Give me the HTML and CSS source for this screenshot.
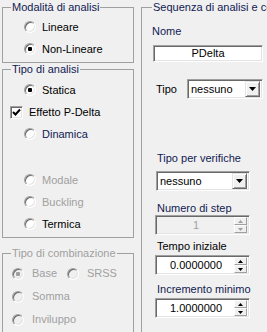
FILE: index.html
```html
<!DOCTYPE html>
<html lang="it">
<head>
    <meta charset="UTF-8">
    <meta name="viewport" content="width=device-width, initial-scale=1.0">
    <title>Parametri di analisi</title>
    <link rel="stylesheet" href="styles.css">
</head>
<body>
  <div class="panel">
    <div class="left">
      <fieldset class="group g-mode">
        <legend>Modalità di analisi</legend>
        <div class="opt"><span class="radio"></span>Lineare</div>
        <div class="opt"><span class="radio on"></span>Non-Lineare</div>
      </fieldset>

      <fieldset class="group g-type">
        <legend>Tipo di analisi</legend>
        <div class="opt"><span class="radio on"></span>Statica</div>
        <div class="opt chk">
          <span class="check">
            <svg width="9" height="9" viewBox="0 0 9 9"><path d="M1 4 L3.5 6.5 L8 1.5" fill="none" stroke="#000" stroke-width="2"/></svg>
          </span>Effetto P-Delta
        </div>
        <div class="opt navy"><span class="radio"></span>Dinamica</div>
        <div class="spacer"></div>
        <div class="opt off"><span class="radio"></span>Modale</div>
        <div class="opt off"><span class="radio"></span>Buckling</div>
        <div class="opt"><span class="radio"></span>Termica</div>
      </fieldset>

      <fieldset class="group g-comb off">
        <legend>Tipo di combinazione</legend>
        <div class="opt-line">
          <div class="opt wide"><span class="radio on"></span>Base</div>
          <div class="opt"><span class="radio"></span>SRSS</div>
        </div>
        <div class="opt"><span class="radio"></span>Somma</div>
        <div class="opt"><span class="radio"></span>Inviluppo</div>
      </fieldset>
    </div>

    <fieldset class="group seq">
      <legend>Sequenza di analisi e combinazioni</legend>

      <div class="lbl navy lbl-nome">Nome</div>
      <div class="field name-field">PDelta</div>

      <div class="tipo-row">
        <span class="tipo-lbl">Tipo</span>
        <div class="combo combo-tipo">
          <span class="combo-text">nessuno</span>
          <span class="combo-btn">
            <svg width="7" height="4" viewBox="0 0 7 4"><path d="M0 0 H7 L3.5 4 Z" fill="#000"/></svg>
          </span>
        </div>
      </div>

      <div class="lbl navy lbl-verif">Tipo per verifiche</div>
      <div class="combo combo-verif">
        <span class="combo-text">nessuno</span>
        <span class="combo-btn">
          <svg width="7" height="4" viewBox="0 0 7 4"><path d="M0 0 H7 L3.5 4 Z" fill="#000"/></svg>
        </span>
      </div>

      <div class="lbl navy lbl-step">Numero di step</div>
      <div class="spin disabled spin-step">
        <span class="spin-val">1</span>
        <span class="spin-btns">
          <span class="spin-btn"><svg width="5" height="3" viewBox="0 0 5 3"><path d="M0 3 H5 L2.5 0 Z" fill="#a0a0a0"/></svg></span>
          <span class="spin-btn"><svg width="5" height="3" viewBox="0 0 5 3"><path d="M0 0 H5 L2.5 3 Z" fill="#a0a0a0"/></svg></span>
        </span>
      </div>

      <div class="lbl lbl-tempo">Tempo iniziale</div>
      <div class="spin">
        <span class="spin-val">0.0000000</span>
        <span class="spin-btns">
          <span class="spin-btn"><svg width="5" height="3" viewBox="0 0 5 3"><path d="M0 3 H5 L2.5 0 Z" fill="#000"/></svg></span>
          <span class="spin-btn"><svg width="5" height="3" viewBox="0 0 5 3"><path d="M0 0 H5 L2.5 3 Z" fill="#000"/></svg></span>
        </span>
      </div>

      <div class="lbl navy lbl-incr">Incremento minimo</div>
      <div class="spin">
        <span class="spin-val">1.0000000</span>
        <span class="spin-btns">
          <span class="spin-btn"><svg width="5" height="3" viewBox="0 0 5 3"><path d="M0 3 H5 L2.5 0 Z" fill="#000"/></svg></span>
          <span class="spin-btn"><svg width="5" height="3" viewBox="0 0 5 3"><path d="M0 0 H5 L2.5 3 Z" fill="#000"/></svg></span>
        </span>
      </div>
    </fieldset>
  </div>
</body>
</html>
```

FILE: styles.css
```css
* {
  box-sizing: border-box;
}

html, body {
  margin: 0;
  padding: 0;
}

body {
  width: 267px;
  height: 332px;
  overflow: hidden;
  background: #f0f0f0;
  font-family: 'Liberation Sans', Arial, sans-serif;
  font-size: 11px;
  line-height: 13px;
  color: #000;
}

.panel {
  display: flex;
  align-items: flex-start;
  padding: 1px 0 0 2px;
}

.left {
  width: 132px;
  flex-shrink: 0;
  display: flex;
  flex-direction: column;
}

/* group boxes */
.group {
  margin: 0;
  padding: 0;
  min-width: 0;
  border: 1px solid #a0a0a0;
}

.group legend {
  margin-left: 8px;
  padding: 0 1px;
  color: #101a52;
}

.g-mode {
  padding: 2px 0 2px 0;
}

.g-type {
  padding: 3px 0 2px 0;
}

.g-comb {
  margin-top: 9px;
  padding: 2px 0 10px 0;
}

.g-comb legend {
  color: #a0a0a0;
}

.seq {
  width: 136px;
  flex-shrink: 0;
  margin-left: 7px;
  height: 340px;
  display: flex;
  flex-direction: column;
  align-items: flex-start;
}

.seq legend {
  margin-left: 10px;
  white-space: nowrap;
}

/* radio / check rows */
.opt {
  display: flex;
  align-items: center;
  height: 22px;
  padding-left: 21px;
  white-space: nowrap;
}

.opt.chk {
  padding-left: 7px;
}

.spacer {
  height: 24px;
}

.navy {
  color: #101a52;
}

.off {
  color: #a0a0a0;
}

.g-comb .opt {
  height: 23px;
  padding-left: 9px;
}

.opt-line {
  display: flex;
}

.g-comb .opt.wide {
  width: 55px;
}

.radio {
  width: 12px;
  height: 12px;
  margin-right: 6px;
  border-radius: 50%;
  background: #fff;
  border: 1px solid;
  border-color: #a0a0a0 #fff #fff #a0a0a0;
  box-shadow: inset 1px 1px 0 #696969, inset -1px -1px 0 #e3e3e3;
  display: flex;
  align-items: center;
  justify-content: center;
  flex-shrink: 0;
}

.radio.on::after {
  content: "";
  width: 4px;
  height: 4px;
  border-radius: 1px;
  background: #000;
}

.g-comb .radio {
  margin-right: 8px;
  background: #f0f0f0;
}

.g-comb .radio.on::after {
  background: #a0a0a0;
}

.check {
  width: 13px;
  height: 13px;
  margin-right: 6px;
  background: #fff;
  border: 1px solid;
  border-color: #a0a0a0 #fff #fff #a0a0a0;
  box-shadow: inset 1px 1px 0 #696969, inset -1px -1px 0 #e3e3e3;
  display: flex;
  align-items: center;
  justify-content: center;
}

.check svg {
  display: block;
}

/* right column */
.lbl {
  margin-left: 10px;
  white-space: nowrap;
}

.lbl-nome {
  margin-top: 11px;
}

.lbl-verif {
  margin-top: 53px;
  margin-left: 15px;
}

.lbl-step {
  margin-top: 11px;
  margin-left: 15px;
}

.lbl-tempo {
  margin-top: 5px;
  margin-left: 15px;
}

.lbl-incr {
  margin-top: 8px;
  margin-left: 15px;
}

.field, .combo, .spin {
  background: #fff;
  border: 1px solid;
  border-color: #a0a0a0 #fff #fff #a0a0a0;
  box-shadow: inset 1px 1px 0 #696969, inset -1px -1px 0 #e3e3e3;
}

.name-field {
  margin-top: 7px;
  margin-left: 11px;
  width: 110px;
  height: 17px;
  text-align: center;
  line-height: 15px;
}

.tipo-row {
  display: flex;
  align-items: center;
  margin-top: 17px;
  margin-left: 14px;
}

.tipo-lbl {
  width: 31px;
}

.combo {
  display: flex;
  align-items: center;
  justify-content: space-between;
  height: 20px;
  padding: 2px;
  flex-shrink: 0;
}

.combo-tipo {
  width: 76px;
}

.combo-verif {
  width: 94px;
  margin-top: 6px;
  margin-left: 14px;
}

.combo-text {
  padding-left: 1px;
}

.combo-btn {
  width: 15px;
  height: 16px;
  background: #f0f0f0;
  border: 1px solid;
  border-color: #e3e3e3 #696969 #696969 #e3e3e3;
  box-shadow: inset 1px 1px 0 #fff, inset -1px -1px 0 #a0a0a0;
  display: flex;
  align-items: center;
  justify-content: center;
}

.spin {
  display: flex;
  align-items: center;
  width: 95px;
  height: 20px;
  margin-top: 2px;
  margin-left: 13px;
  padding: 2px;
}

.spin.spin-step {
  margin-top: 0;
}

.spin.disabled {
  background: #f0f0f0;
  color: #a0a0a0;
}

.spin-val {
  flex: 1;
  text-align: center;
}

.spin-btns {
  display: flex;
  flex-direction: column;
  width: 13px;
  height: 16px;
}

.spin-btn {
  flex: 1;
  background: #f0f0f0;
  border: 1px solid;
  border-color: #fff #a0a0a0 #a0a0a0 #fff;
  display: flex;
  align-items: center;
  justify-content: center;
}

.spin-btn svg {
  display: block;
}
```
